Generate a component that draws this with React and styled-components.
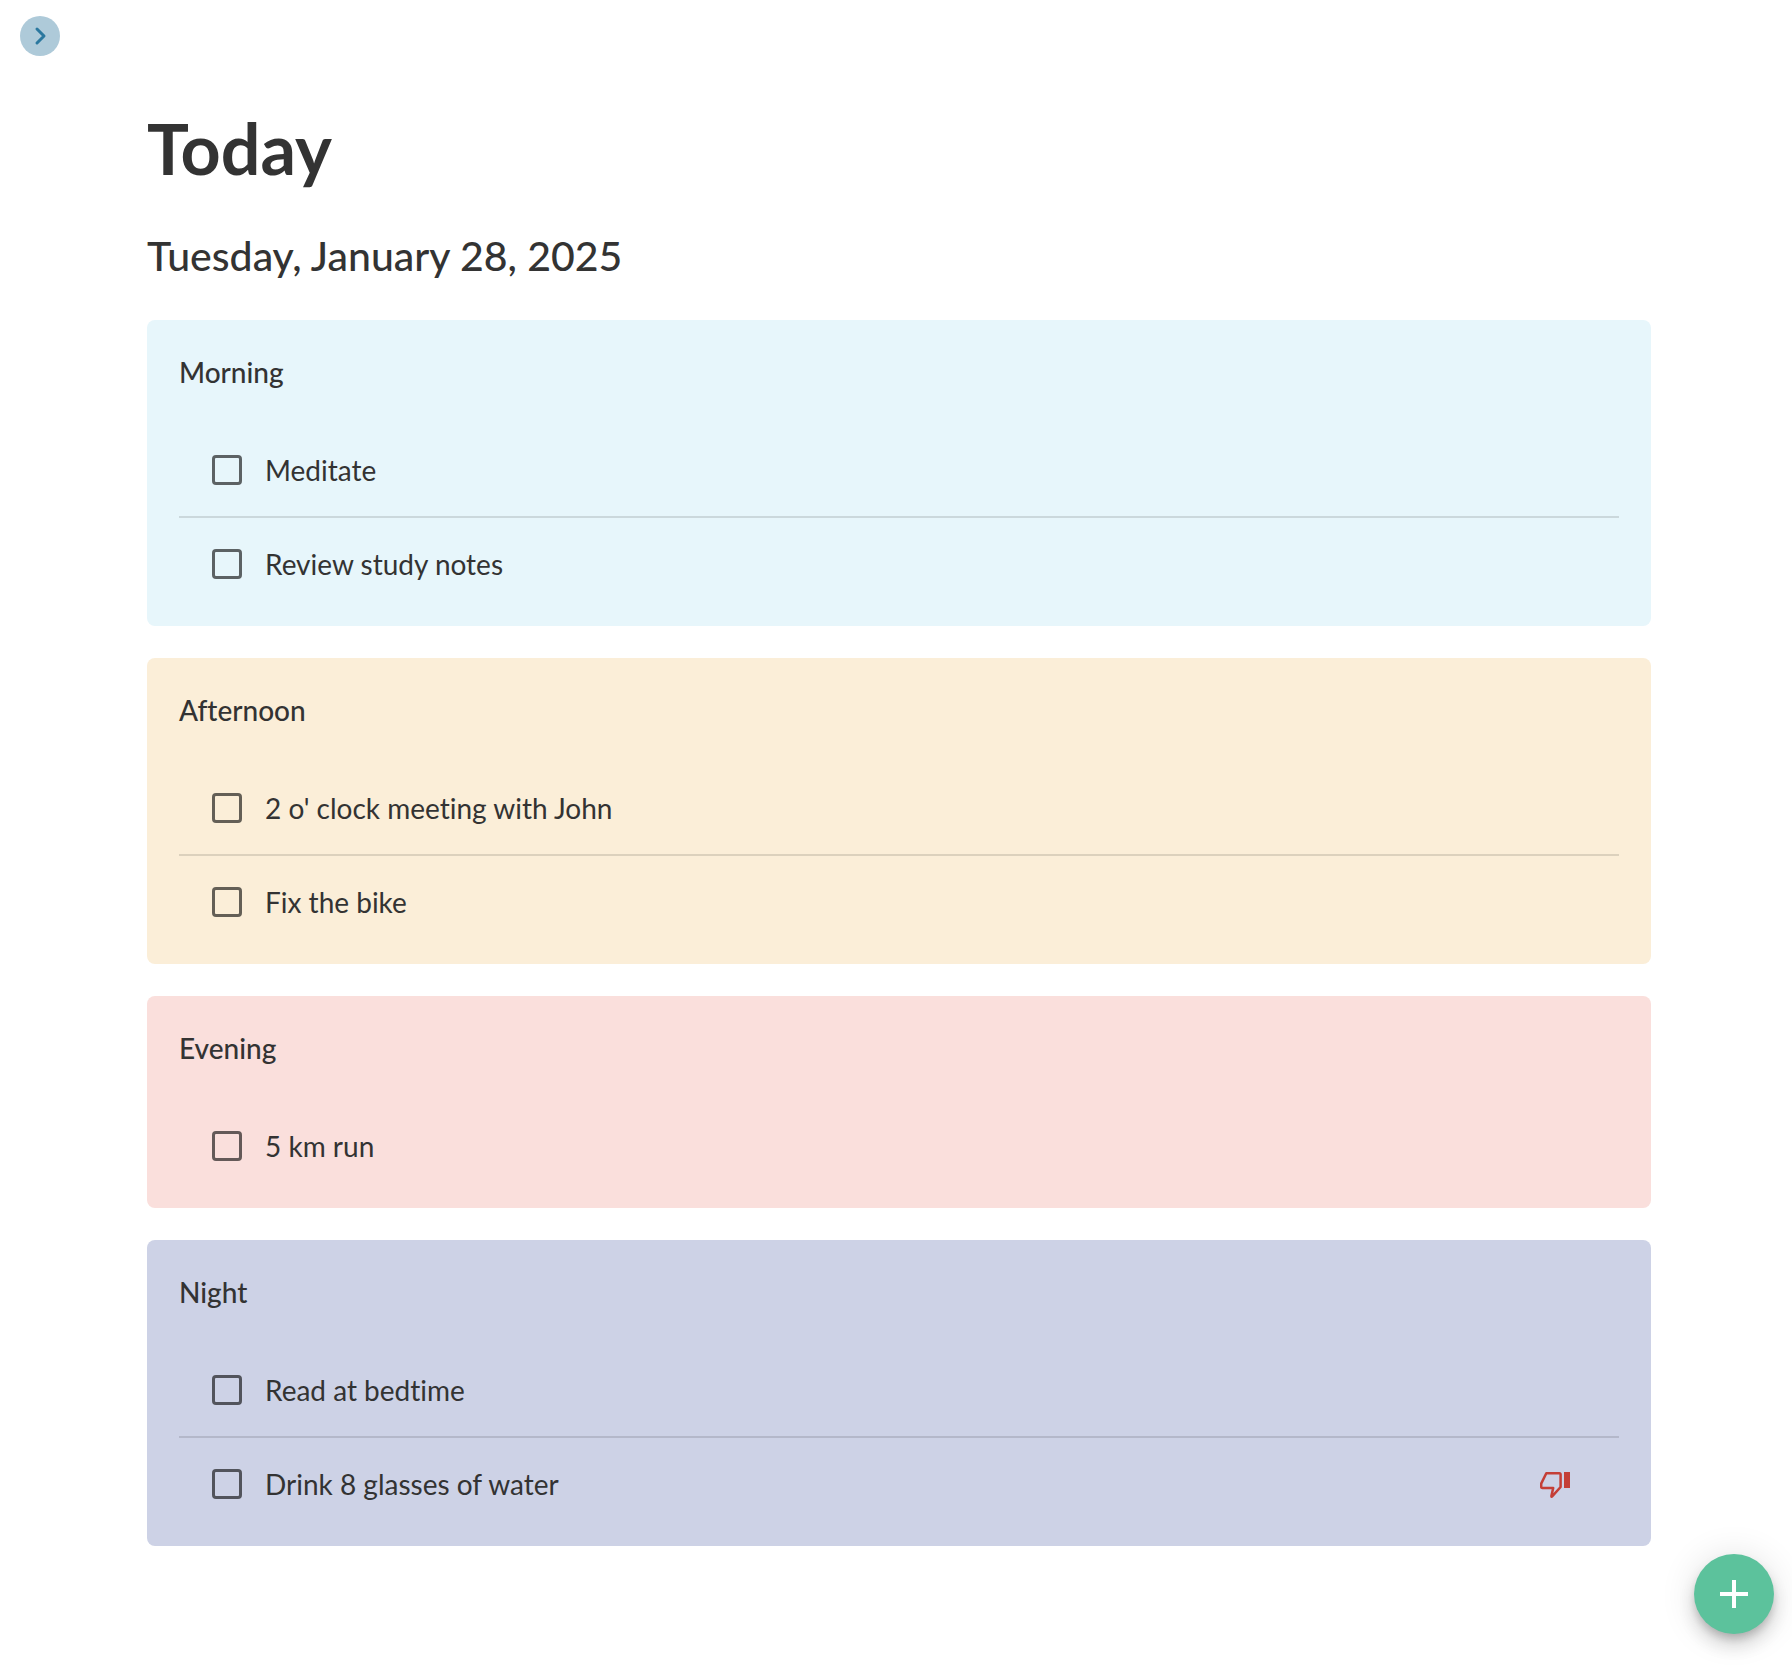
import React, { useState } from "react";
import styled, { createGlobalStyle } from "styled-components";

const GlobalStyle = createGlobalStyle`
  *, *::before, *::after { box-sizing: border-box; }
  body {
    margin: 0;
    background: #ffffff;
    color: #333333;
    font-family: Lato, "Open Sans", sans-serif;
    font-variant-ligatures: none;
  }
`;

const Page = styled.div`
  min-height: 100vh;
`;

const TopBar = styled.header`
  display: flex;
  padding: 16px 20px 0;
`;

const ToggleButton = styled.button`
  display: grid;
  place-items: center;
  width: 40px;
  height: 40px;
  padding: 0;
  border: 0;
  border-radius: 50%;
  background: #aecad9;
  color: #2b789f;
  cursor: pointer;
`;

const Main = styled.main`
  padding: 46px 141px 120px 147px;
`;

const Title = styled.h1`
  margin: 0;
  font-size: 70px;
  line-height: 92px;
  font-weight: 700;
`;

const DateLine = styled.h2`
  margin: 18px 0 20px;
  font-size: 41px;
  line-height: 88px;
  font-weight: 500;
`;

const Sections = styled.div`
  display: grid;
  gap: 32px;
`;

const Card = styled.section`
  padding: 32px 32px 16px;
  border-radius: 8px;
  background: ${(p) => p.$tone};
`;

const CardTitle = styled.h3`
  margin: 0 0 32px;
  font-size: 28px;
  line-height: 40px;
  font-weight: 500;
`;

const TaskList = styled.ul`
  margin: 0;
  padding: 0;
  list-style: none;
`;

const TaskRow = styled.li`
  display: flex;
  align-items: center;
  justify-content: space-between;
  padding: 0 49px 0 33px;

  & + & {
    border-top: 2px solid rgba(0, 0, 0, 0.12);
  }
`;

const TaskLabel = styled.label`
  display: flex;
  align-items: center;
  gap: 23px;
  font-size: 28px;
  line-height: 92px;
  cursor: pointer;
`;

const Checkbox = styled.input`
  appearance: none;
  width: 30px;
  height: 30px;
  margin: 0;
  border: 3px solid rgba(0, 0, 0, 0.6);
  border-radius: 4px;
  cursor: pointer;

  &:checked {
    background: rgba(0, 0, 0, 0.6);
  }
`;

const AddButton = styled.button`
  position: fixed;
  right: 18px;
  bottom: 32px;
  display: grid;
  place-items: center;
  width: 80px;
  height: 80px;
  padding: 0;
  border: 0;
  border-radius: 50%;
  background: #5cc29c;
  color: #ffffff;
  cursor: pointer;
  box-shadow:
    0 6px 10px -2px rgba(0, 0, 0, 0.2),
    0 12px 20px 0 rgba(0, 0, 0, 0.14),
    0 2px 36px 0 rgba(0, 0, 0, 0.12);
`;

const sections = [
  { name: "Morning", tone: "#e7f6fb", tasks: [{ text: "Meditate" }, { text: "Review study notes" }] },
  { name: "Afternoon", tone: "#fbeed8", tasks: [{ text: "2 o' clock meeting with John" }, { text: "Fix the bike" }] },
  { name: "Evening", tone: "#fadfdc", tasks: [{ text: "5 km run" }] },
  { name: "Night", tone: "#cdd2e6", tasks: [{ text: "Read at bedtime" }, { text: "Drink 8 glasses of water", missed: true }] },
];

const ChevronIcon = () => (
  <svg width="40" height="40" viewBox="0 0 40 40" fill="none" stroke="currentColor" strokeWidth="3" strokeLinecap="round" strokeLinejoin="round" aria-hidden="true">
    <path d="M17 13 24 20 17 27" />
  </svg>
);

const ThumbDownIcon = () => (
  <svg width="30" height="32" viewBox="0 -4 30 32" fill="none" role="img" aria-label="Missed">
    <path d="M6.3 1.2H19.4Q20.6 1.2 20.6 2.6V15L12.4 24.2Q11.3 25.4 11.4 24L13.2 16H2.4Q1.2 16 1.2 14.8V11.6Z" stroke="#c43f37" strokeWidth="2.5" strokeLinejoin="round" />
    <path d="M24 0h6v16h-6z" fill="#c43f37" />
  </svg>
);

const PlusIcon = () => (
  <svg width="28" height="28" viewBox="0 0 28 28" fill="currentColor" aria-hidden="true">
    <path d="M12 0h4v12h12v4H16v12h-4V16H0v-4h12z" />
  </svg>
);

function Task({ text, missed }) {
  const [done, setDone] = useState(false);
  return (
    <TaskRow>
      <TaskLabel>
        <Checkbox type="checkbox" checked={done} onChange={(e) => setDone(e.target.checked)} />
        <span>{text}</span>
      </TaskLabel>
      {missed && <ThumbDownIcon />}
    </TaskRow>
  );
}

export default function App() {
  return (
    <Page>
      <GlobalStyle />
      <TopBar>
        <ToggleButton type="button" aria-label="Open sidebar">
          <ChevronIcon />
        </ToggleButton>
      </TopBar>
      <Main>
        <Title>Today</Title>
        <DateLine>Tuesday, January 28, 2025</DateLine>
        <Sections>
          {sections.map((section) => (
            <Card key={section.name} $tone={section.tone}>
              <CardTitle>{section.name}</CardTitle>
              <TaskList>
                {section.tasks.map((task) => (
                  <Task key={task.text} {...task} />
                ))}
              </TaskList>
            </Card>
          ))}
        </Sections>
      </Main>
      <AddButton type="button" aria-label="Add task">
        <PlusIcon />
      </AddButton>
    </Page>
  );
}
